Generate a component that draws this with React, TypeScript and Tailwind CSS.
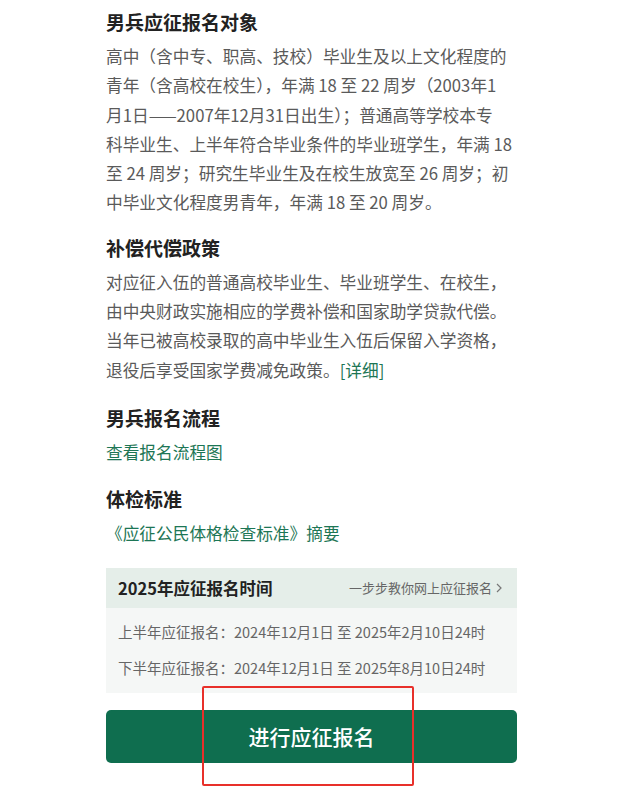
import React from "react";

const font = { fontFamily: '"Noto Sans CJK SC", "Noto Sans", sans-serif' };

function Lines({ lines }: { lines: React.ReactNode[] }) {
  return (
    <div className="text-[16.7px] leading-[29.3px] text-[#5a5a5a]">
      {lines.map((l, i) => (
        <div key={i} className="whitespace-nowrap">
          {l}
        </div>
      ))}
    </div>
  );
}

export default function App() {
  return (
    <div
      className="relative w-[620px] h-[800px] bg-white overflow-hidden"
      style={font}
    >
      <div className="pl-[106px] pr-[103px] pt-[7px]">
        <h2 className="text-[19px] leading-[29px] font-bold text-[#222]">男兵应征报名对象</h2>
        <div className="mt-[6px]">
          <Lines
            lines={[
              "高中（含中专、职高、技校）毕业生及以上文化程度的",
              "青年（含高校在校生），年满 18 至 22 周岁（2003年1",
              "月1日——2007年12月31日出生）；普通高等学校本专",
              "科毕业生、上半年符合毕业条件的毕业班学生，年满 18",
              "至 24 周岁；研究生毕业生及在校生放宽至 26 周岁；初",
              "中毕业文化程度男青年，年满 18 至 20 周岁。",
            ]}
          />
        </div>

        <h2 className="mt-[15px] text-[19px] leading-[29px] font-bold text-[#222]">补偿代偿政策</h2>
        <div className="mt-[6px]">
          <Lines
            lines={[
              "对应征入伍的普通高校毕业生、毕业班学生、在校生，",
              "由中央财政实施相应的学费补偿和国家助学贷款代偿。",
              "当年已被高校录取的高中毕业生入伍后保留入学资格，",
              <>
                退役后享受国家学费减免政策。<span className="text-[#1d7655]">[详细]</span>
              </>,
            ]}
          />
        </div>

        <h2 className="mt-[18px] text-[19px] leading-[29px] font-bold text-[#222]">男兵报名流程</h2>
        <div className="mt-[6px] text-[16.7px] leading-[29px] text-[#1d7655]">查看报名流程图</div>

        <h2 className="mt-[17px] text-[19px] leading-[29px] font-bold text-[#222]">体检标准</h2>
        <div className="mt-[6px] text-[16.7px] leading-[29px] text-[#1d7655]">《应征公民体格检查标准》摘要</div>

        <div className="mt-[20px] w-[411px]">
          <div className="h-[40px] bg-[#e5eee9] flex items-center justify-between pl-[12px] pr-[14px]">
            <span className="text-[16.5px] font-bold text-[#222]">2025年应征报名时间</span>
            <span className="text-[13px] text-[#666] flex items-center">
              一步步教你网上应征报名
              <svg width="8" height="12" viewBox="0 0 8 12" className="ml-[3px]">
                <path d="M2 2 L6 6 L2 10" fill="none" stroke="#777" strokeWidth="1.2" />
              </svg>
            </span>
          </div>
          <div className="bg-[#f5f7f6] pl-[12px] pt-[6px] pb-[7px] text-[14.5px] text-[#666]">
            <div className="h-[36px] flex items-center whitespace-nowrap">上半年应征报名：2024年12月1日 至 2025年2月10日24时</div>
            <div className="h-[36px] flex items-center whitespace-nowrap">下半年应征报名：2024年12月1日 至 2025年8月10日24时</div>
          </div>
        </div>

        <button className="mt-[17px] w-[411px] h-[53px] rounded-[5px] bg-[#0f6e4f] text-white text-[21px] font-medium flex items-center justify-center">
          进行应征报名
        </button>
      </div>

      <div className="absolute left-[202px] top-[686px] w-[212px] h-[100px] border-2 border-[#e8302a] rounded-[2px]" />
    </div>
  );
}
